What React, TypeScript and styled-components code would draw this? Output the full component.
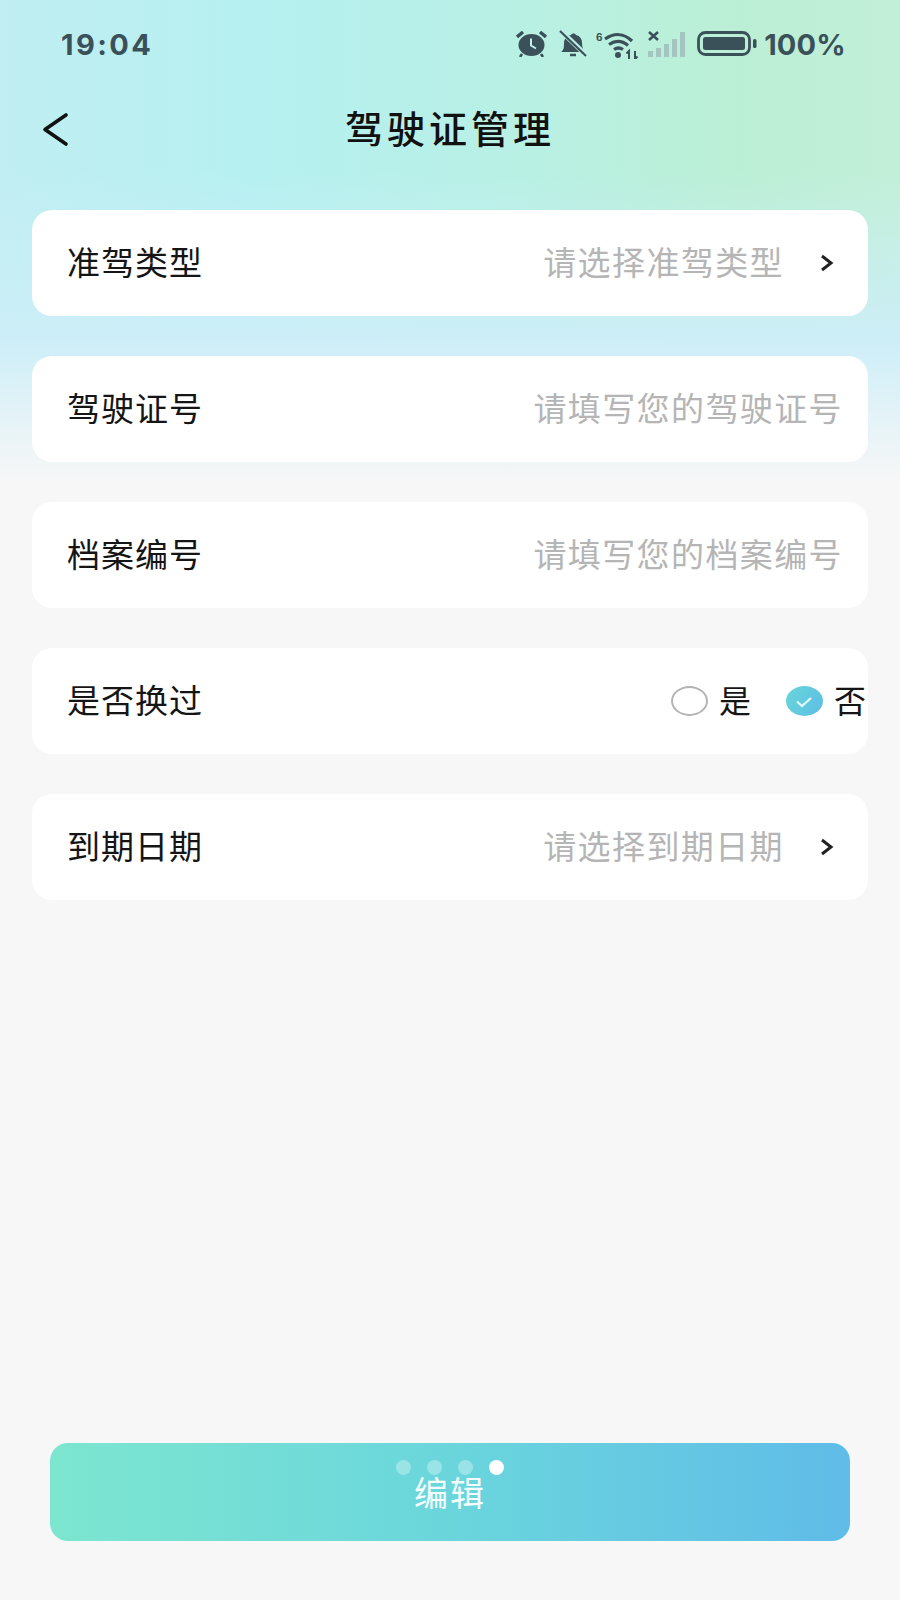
import styled, { createGlobalStyle } from "styled-components";

const GlobalStyle = createGlobalStyle`
  html, body {
    margin: 0;
    padding: 0;
    background: #f7f7f7;
  }
  * {
    box-sizing: border-box;
  }
`;

const Page = styled.div`
  width: 900px;
  height: 1600px;
  display: flex;
  flex-direction: column;
  overflow: hidden;
  font-family: "Noto Sans CJK SC", "Noto Sans", sans-serif;
  color: #111;
  background:
    linear-gradient(180deg, rgba(247, 247, 247, 0) 340px, #f7f7f7 482px),
    linear-gradient(180deg, rgba(205, 238, 248, 0) 170px, #cdeef8 345px),
    linear-gradient(90deg, #c0eef2 0, #b6f0f1 28%, #b8f0e4 58%, #bbefd5 82%, #c2efd8 100%);
`;

const StatusBar = styled.div`
  height: 88px;
  padding: 0 54px 0 61px;
  display: flex;
  align-items: center;
  justify-content: space-between;
  color: #3a5159;
  font-family: Inter, "Liberation Sans", sans-serif;
  font-weight: 700;
  font-size: 29px;
`;

const Time = styled.span`
  letter-spacing: 2.4px;
`;

const StatusIcons = styled.div`
  display: flex;
  align-items: center;
`;

const Percent = styled.span`
  margin-left: 7px;
  font-size: 29px;
  letter-spacing: 0.2px;
`;

const NavBar = styled.div`
  position: relative;
  height: 86px;
  padding-bottom: 9px;
  display: flex;
  align-items: center;
  justify-content: center;
`;

const BackButton = styled.div`
  position: absolute;
  left: 42px;
  top: 24px;
  display: flex;
`;

const Title = styled.h1`
  margin: 0;
  font-size: 38px;
  font-weight: 500;
  letter-spacing: 4px;
  color: #111;
`;

const Form = styled.div`
  margin-top: 36px;
  padding: 0 32px;
  display: flex;
  flex-direction: column;
  gap: 40px;
`;

const Card = styled.div`
  height: 106px;
  padding: 0 0 4px 35px;
  display: flex;
  align-items: center;
  justify-content: space-between;
  background: #fff;
  border-radius: 20px;
`;

const Label = styled.span`
  font-size: 33px;
  letter-spacing: 1px;
  color: #151515;
`;

const ValueSide = styled.div<{ $inset: number }>`
  display: flex;
  align-items: center;
  padding-right: ${(p) => p.$inset}px;
`;

const Placeholder = styled.span`
  font-size: 33px;
  letter-spacing: 1.4px;
  color: #b5b5b5;
`;

const Chevron = styled.svg`
  margin-left: 35px;
  position: relative;
  top: 2px;
`;

const RadioOption = styled.div`
  display: flex;
  align-items: center;
  gap: 11px;
  font-size: 32px;
  color: #151515;
  & + & {
    margin-left: 35px;
  }
`;

const RadioMark = styled.span<{ $checked?: boolean }>`
  width: 37px;
  height: 30px;
  margin-top: 4px;
  display: flex;
  align-items: center;
  justify-content: center;
  border-radius: 50%;
  border: ${(p) => (p.$checked ? "none" : "2.5px solid #b3b3b3")};
  background: ${(p) =>
    p.$checked ? "linear-gradient(120deg, #68d6d8, #5dbde6)" : "#fff"};
`;

const Footer = styled.div`
  margin-top: auto;
  padding: 0 50px 59px;
`;

const EditButton = styled.div`
  position: relative;
  height: 98px;
  padding-bottom: 2px;
  display: flex;
  align-items: center;
  justify-content: center;
  border-radius: 18px;
  background: linear-gradient(90deg, #7de6d0 0, #6ad6dc 50%, #60bce8 100%);
  color: #f4fdfd;
  font-size: 34px;
  letter-spacing: 2px;
`;

const Dots = styled.div`
  position: absolute;
  top: 17px;
  left: 346px;
  display: flex;
  gap: 16px;
`;

const Dot = styled.span<{ $active?: boolean }>`
  width: 15px;
  height: 15px;
  border-radius: 50%;
  background: ${(p) => (p.$active ? "#fff" : "rgba(255,255,255,0.32)")};
`;

const AlarmIcon = () => (
  <svg width="31" height="26" viewBox="0 0 31 26">
    <ellipse cx="15.5" cy="14" rx="13" ry="11" fill="#3a5159" />
    <path d="M15 7.5v7l5 3" stroke="#c5f0ea" strokeWidth="2" fill="none" />
    <path d="M1 6l6-5M30 6l-6-5" stroke="#3a5159" strokeWidth="3.4" />
    <path d="M6 23l-2 3M25 23l2 3" stroke="#3a5159" strokeWidth="2.6" />
  </svg>
);

const BellOffIcon = () => (
  <svg width="30" height="28" viewBox="0 0 30 28" style={{ marginLeft: 11 }}>
    <path
      d="M3 22c3-2 3-5 3-9 0-5 4-8 7-8 1-2 4-2 5 0 4 1 6 4 6 8 0 4 1 7 3 9z"
      fill="#3a5159"
    />
    <path d="M12 25h6" stroke="#3a5159" strokeWidth="2.5" />
    <path d="M3 1l25 24" stroke="#bdefe6" strokeWidth="5" />
    <path d="M2 1l26 25" stroke="#3a5159" strokeWidth="2.2" />
  </svg>
);

const WifiIcon = () => (
  <svg width="46" height="30" viewBox="0 -2 46 30" style={{ marginLeft: 8 }}>
    <text x="0" y="10" fontSize="10" fontWeight="700" fill="#3a5159" fontFamily="Inter">
      6
    </text>
    <path
      d="M9 8c9-6 19-6 27 2M13 13.5c6-4 13-4 19 1M18 18.5c3-2 6-2 9 0"
      stroke="#3a5159"
      strokeWidth="3.2"
      fill="none"
    />
    <circle cx="22" cy="24" r="3" fill="#3a5159" />
    <path
      d="M33 28v-8l-2.5 2.5M39 20v8l2.5-2.5"
      stroke="#3a5159"
      strokeWidth="2"
      fill="none"
    />
  </svg>
);

const SignalIcon = () => (
  <svg width="37" height="26" viewBox="0 0 37 26" style={{ marginLeft: 6 }}>
    <path d="M1 1l9 8M10 1l-9 8" stroke="#3a5159" strokeWidth="2.6" />
    <g fill="#a3c4bf">
      <rect x="0" y="20" width="5" height="6" />
      <rect x="8" y="17" width="5" height="9" />
      <rect x="16" y="13" width="5" height="13" />
      <rect x="24" y="8" width="5" height="18" />
      <rect x="32" y="1" width="5" height="25" />
    </g>
  </svg>
);

const BatteryIcon = () => (
  <svg width="60" height="26" viewBox="0 0 60 26" style={{ marginLeft: 12 }}>
    <rect x="1.5" y="1.5" width="51" height="22" rx="7" fill="none" stroke="#3a5159" strokeWidth="2.8" />
    <rect x="6" y="6" width="42" height="13" rx="2.5" fill="#3a5159" />
    <rect x="56" y="8" width="3.5" height="9" rx="1.5" fill="#3a5159" />
  </svg>
);

const RowChevron = () => (
  <Chevron width="16" height="20" viewBox="0 0 16 20">
    <path d="M3 3l9 7-9 7" stroke="#222" strokeWidth="3" fill="none" />
  </Chevron>
);

const App = (): JSX.Element => {
  return (
    <Page>
      <GlobalStyle />
      <StatusBar>
        <Time>19:04</Time>
        <StatusIcons>
          <AlarmIcon />
          <BellOffIcon />
          <WifiIcon />
          <SignalIcon />
          <BatteryIcon />
          <Percent>100%</Percent>
        </StatusIcons>
      </StatusBar>
      <NavBar>
        <BackButton>
          <svg width="28" height="36" viewBox="0 0 28 36">
            <path
              d="M24 3L3 17.5 24 32"
              stroke="#111"
              strokeWidth="3.6"
              strokeLinecap="round"
              strokeLinejoin="round"
              fill="none"
            />
          </svg>
        </BackButton>
        <Title>驾驶证管理</Title>
      </NavBar>
      <Form>
        <Card>
          <Label>准驾类型</Label>
          <ValueSide $inset={33}>
            <Placeholder>请选择准驾类型</Placeholder>
            <RowChevron />
          </ValueSide>
        </Card>
        <Card>
          <Label>驾驶证号</Label>
          <ValueSide $inset={25}>
            <Placeholder>请填写您的驾驶证号</Placeholder>
          </ValueSide>
        </Card>
        <Card>
          <Label>档案编号</Label>
          <ValueSide $inset={25}>
            <Placeholder>请填写您的档案编号</Placeholder>
          </ValueSide>
        </Card>
        <Card>
          <Label>是否换过</Label>
          <ValueSide $inset={2}>
            <RadioOption>
              <RadioMark />是
            </RadioOption>
            <RadioOption>
              <RadioMark $checked>
                <svg width="18" height="13" viewBox="0 0 18 13">
                  <path d="M2 6.5l5 4.5 9-8" stroke="#e6fbfb" strokeWidth="2.2" fill="none" />
                </svg>
              </RadioMark>
              否
            </RadioOption>
          </ValueSide>
        </Card>
        <Card>
          <Label>到期日期</Label>
          <ValueSide $inset={33}>
            <Placeholder>请选择到期日期</Placeholder>
            <RowChevron />
          </ValueSide>
        </Card>
      </Form>
      <Footer>
        <EditButton>
          <Dots>
            <Dot />
            <Dot />
            <Dot />
            <Dot $active />
          </Dots>
          编辑
        </EditButton>
      </Footer>
    </Page>
  );
};

export default App;
